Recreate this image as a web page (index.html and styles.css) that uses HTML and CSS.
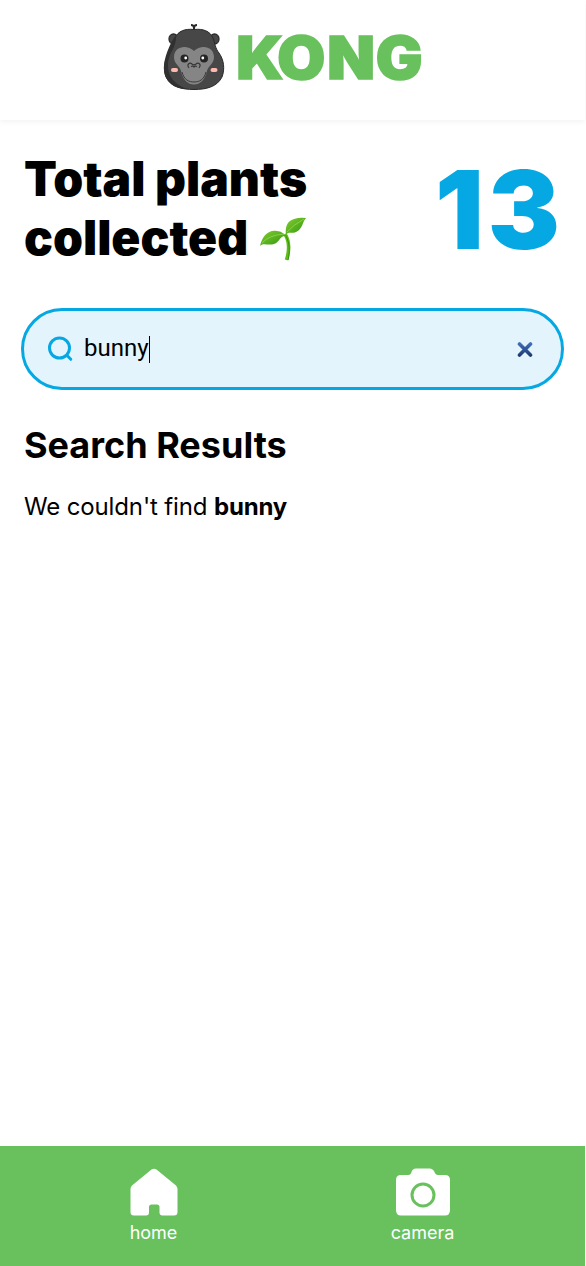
FILE: index.html
```
<!DOCTYPE html>
<html lang="en">
<head>
<meta charset="utf-8">
<title>Kong</title>
<link rel="stylesheet" href="styles.css">
</head>
<body>
<div class="app">
  <header class="header">
    <svg class="logo" width="262" height="70" viewBox="162 22 262 70" role="img" aria-label="Kong">
      <g stroke="#292929" fill="#474747">
        <path d="M194 31V28M194 28Q194 25 191 25M194 28Q194 25 197 25" fill="none" stroke-width="2"/>
        <ellipse cx="173.500" cy="39" rx="4.500" ry="5" stroke-width="1.300"/>
        <ellipse cx="214.500" cy="39" rx="4.500" ry="5" stroke-width="1.300"/>
        <path d="M194 29.500C203 28.500 210 31 213 38C215 43 215 48 219 53C224 60 225 69 222 77C217 87 206 89.500 194 89.500S171 87 166 77C163 69 164 60 170 53C174 48 173 43 175 38C178 31 185 28.500 194 29.500Z" stroke-width="1"/>
      </g>
      <path d="M176 35C170 43 163 59 164 70C165 82 174 89 187 89C174 84 168 76 168 66C168 52 177 48 176 35Z" fill="#303030"/>
      <path d="M194 51C187 44 174 46 174 57C174 64 180 66 181 71C183 80 188 84.500 194 84.500S205 80 207 71C208 66 214 64 214 57C214 46 201 44 194 51Z" fill="#858585"/>
      <path d="M182 72C184 80 189 82 194 82S204 80 206 72" fill="none" stroke="#393939" stroke-width="1"/>
      <path d="M189 68C186 64 190 62 192 64Q194 65.500 196 64C198 62 202 64 199 68M191.500 67C192 65 194 66.500 194 67.500C194 66.500 196 65 196.500 67" fill="none" stroke="#363636" stroke-width="1.100"/>
      <circle cx="184.500" cy="58.500" r="4" fill="#252525"/><circle cx="204" cy="58.500" r="4" fill="#252525"/>
      <circle cx="185.700" cy="58" r="1.400" fill="#fff"/><circle cx="202.800" cy="58" r="1.400" fill="#fff"/>
      <rect x="171" y="68" width="7" height="4" rx="2" fill="#ffb8ad"/><rect x="210.500" y="68" width="7" height="4" rx="2" fill="#ffb8ad"/>
      <text class="wordmark" transform="translate(0 78.600) scale(1.060 1)" x="223 261.500 308.700 354.500" y="0">KONG</text>
    </svg>
  </header>
  <main class="main">
    <section class="summary">
      <h1 class="title">Total plants<br>collected <svg class="sprout" width="48" height="46" viewBox="0 0 48 46" aria-hidden="true">
        <defs><linearGradient id="leaf" x1="0" y1="0" x2="1" y2="1"><stop offset="0" stop-color="#84cf30"/><stop offset="1" stop-color="#2f940e"/></linearGradient></defs>
        <path d="M26 17C31 25 30 35 27.500 43" fill="none" stroke="#60bd18" stroke-width="3.600"/>
        <path d="M26.500 18C31 26 31 35 29 43" fill="none" stroke="#36940f" stroke-width="1"/>
        <path d="M1 29C3 19 10 12 18 14C22 14 25 17 27 19C21 18 21 25 15 27C9 29 4 25 1 29Z" fill="url(#leaf)"/>
        <path d="M27 18C26 10 28 4 35 2Q41 0 47 1C43 5 44 12 37 15C32 17 29 14 27 18Z" fill="url(#leaf)"/>
        <path d="M3 26Q10 18 25 17M28 15Q34 8 45 2" fill="none" stroke="#91d957" stroke-width=".8"/>
      </svg></h1>
      <div class="count">13</div>
    </section>
    <div class="search">
      <svg class="search-icon" width="26" height="26" viewBox="0 0 26 26"><circle cx="11.500" cy="12" r="10"/><path d="M18.800 19.300L22.800 23.300"/></svg>
      <span class="query">bunny</span><span class="caret"></span>
      <svg class="clear" width="16" height="16" viewBox="0 0 16 16"><defs><linearGradient id="cross" gradientUnits="userSpaceOnUse" x1="0" y1="0" x2="0" y2="16"><stop stop-color="#4579c4"/><stop offset="1" stop-color="#1c356c"/></linearGradient></defs><path d="M2.500 3L13.500 14M13.500 3L2.500 14" stroke="url(#cross)" stroke-width="3.600"/></svg>
    </div>
    <h2 class="results">Search Results</h2>
    <p class="message">We couldn't find <strong>bunny</strong></p>
  </main>
  <nav class="nav">
    <a class="item"><svg class="nav-icon" width="54" height="48" viewBox="0 0 54 48"><path d="M24.500 1.500Q27 0 29.500 1.500L49 17.500Q50.500 19 50.500 21V44Q50.500 47.500 47 47.500H35.500Q32.500 47.500 32.500 44.500V39Q32.500 36.500 30 36.500H24.500Q22 36.500 22 39V44.500Q22 47.500 19 47.500H7Q3.500 47.500 3.500 44V21Q3.500 19 5 17.500Z"/></svg><span>home</span></a>
    <a class="item"><svg class="nav-icon" width="54" height="48" viewBox="0 0 54 48"><path d="M5 7H12Q15 7 15.500 4Q16.500 .5 20 .5H33.500Q37 .5 38.500 4Q39.500 7 42 7H49Q54 7 54 12V42Q54 47.500 49 47.500H5Q0 47.500 0 42V12Q0 7 5 7Z"/><circle cx="27" cy="27" r="11" fill="#fff" stroke="#69c15d" stroke-width="3"/></svg><span>camera</span></a>
  </nav>
</div>
</body>
</html>
```
FILE: styles.css
```
* { box-sizing: border-box; }
body { margin: 0; background: #fff; color: #000; font-family: Inter, sans-serif; }
.app { width: 585px; height: 1266px; display: flex; flex-direction: column; }
.header { height: 120px; padding-top: 22px; display: flex; align-items: flex-start; justify-content: center; box-shadow: 0 2px 6px rgba(0,0,0,.05); }
.logo { display: block; overflow: visible; }
.wordmark { font-family: Inter, sans-serif; font-weight: 900; font-size: 58.5px; fill: #69c15d; stroke: #69c15d; stroke-width: 1.6px; }
.main { flex: 1; padding: 29px 21px 0; }
.summary { height: 159px; padding: 0 0 0 3px; display: flex; justify-content: space-between; }
.title { margin: 0; font-size: 48px; line-height: 59px; font-weight: 900; white-space: nowrap; }
.sprout { display: inline-block; vertical-align: -8px; margin-left: 1px; }
.count { color: #06a8e4; font-size: 108px; line-height: 122px; font-weight: 900; letter-spacing: 4px; }
.search { height: 82px; border: 3px solid #06a8e4; border-radius: 41px; background: #e4f4fc; padding: 0 28px 0 24px; display: flex; align-items: center; }
.search-icon { fill: none; stroke: #06a8e4; stroke-width: 3; stroke-linecap: round; }
.query { width: 65px; margin-left: 10px; padding-bottom: 1px; font-family: Roboto, sans-serif; font-size: 24px; line-height: 29px; }
.caret { width: 1px; height: 27px; background: #000; }
.clear { margin-left: auto; stroke-linecap: round; }
.results { margin: 33px 3px 0; font-size: 36px; line-height: 44px; font-weight: 700; }
.message { margin: 25px 3px 0; font-size: 24px; line-height: 29px; letter-spacing: -.14px; }
.message strong { font-weight: 700; }
.nav { height: 120px; background: #69c15d; color: #fff; padding: 22px 0 0 19px; display: flex; }
.item { width: 269px; display: flex; flex-direction: column; align-items: center; font-size: 18px; line-height: 22px; }
.nav-icon { fill: #fff; margin-bottom: 6px; }
```
